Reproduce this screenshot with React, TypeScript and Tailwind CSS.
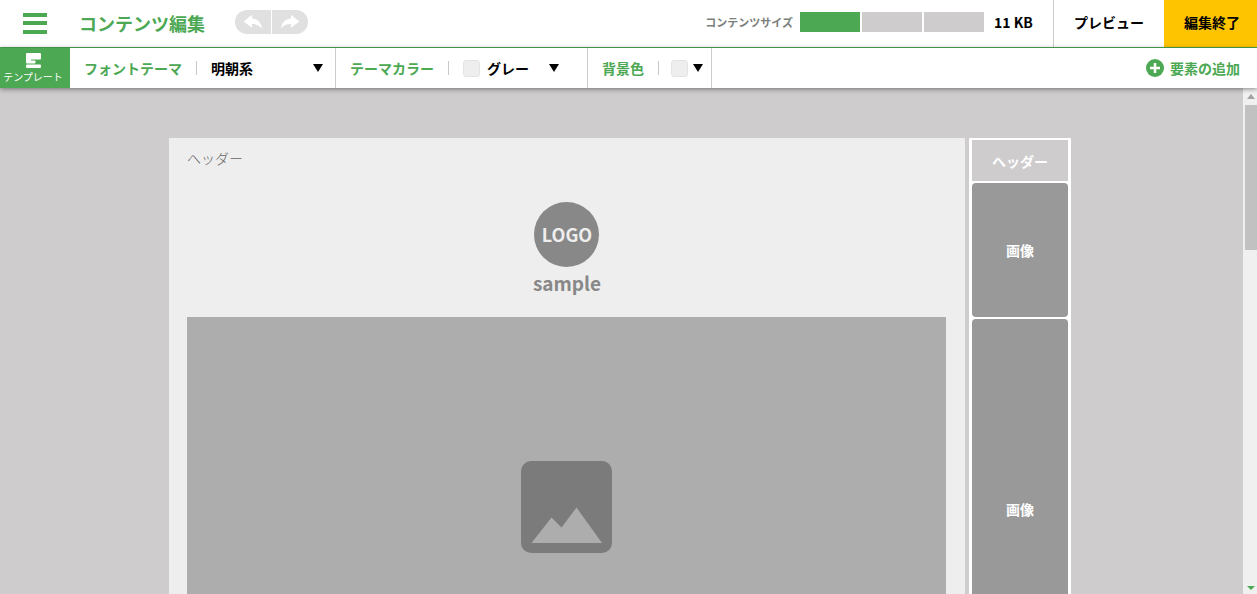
import React from 'react';

const sizeSteps = [
  { id: 'small', className: 'bg-[#4ca853]' },
  { id: 'medium', className: 'bg-[#cecccd]' },
  { id: 'large', className: 'bg-[#cecccd]' },
];

const blocks = [
  { id: 'image-1', label: '画像', className: 'h-[134px]' },
  { id: 'image-2', label: '画像', className: 'h-[380px]' },
];

const Arrow = ({ className = '' }: { className?: string }) => (
  <svg className={`h-2 w-2.5 shrink-0 ${className}`} viewBox="0 0 10 8" aria-hidden="true">
    <path d="M0 0h10L5 8z" fill="currentColor" />
  </svg>
);

const Divider = () => <span className="h-3.5 w-px shrink-0 bg-[#c8c8c8]" />;

const Swatch = () => (
  <span className="h-[17px] w-[17px] shrink-0 rounded-[3px] border border-[#e3e5e3] bg-[#eeeeee]" />
);

const HistoryArrow = () => (
  <path d="M8.600 8.500 17 1.800v3.700c5.500.4 9 3.800 10.200 10.300-2.700-3.300-5.700-4.700-10.200-4.700v3.600z" fill="#fff" />
);

const Header = () => (
  <header className="flex h-12 shrink-0 items-stretch border-b border-[#4ca853] bg-white">
    <button type="button" aria-label="メニュー" className="flex w-[70px] shrink-0 items-center justify-center">
      <svg width="24" height="21" viewBox="0 0 24 21" fill="#4ca853">
        <path d="M0 0h24v4H0zM0 8h24v4H0zM0 17h24v4H0z" />
      </svg>
    </button>
    <h1 className="ml-[9px] flex shrink-0 items-center pb-0.5 text-lg font-bold text-[#4ca853]">コンテンツ編集</h1>
    <div className="mb-1 ml-[30px] flex shrink-0 items-center gap-px">
      <button type="button" aria-label="元に戻す" className="h-6 w-9 rounded-l-full bg-[#e0e0e0]">
        <svg width="36" height="24" viewBox="0 -3 36 24">
          <HistoryArrow />
        </svg>
      </button>
      <button type="button" aria-label="やり直す" className="h-6 w-9 rounded-r-full bg-[#e0e0e0]">
        <svg width="36" height="24" viewBox="0 -3 36 24">
          <g transform="translate(36 0) scale(-1 1)">
            <HistoryArrow />
          </g>
        </svg>
      </button>
    </div>
    <div className="ml-auto flex shrink-0 items-center pb-[3px]">
      <span className="text-[11px] font-bold text-[#7b807b]">コンテンツサイズ</span>
      <div className="ml-[7px] flex gap-0.5">
        {sizeSteps.map((step) => (
          <span key={step.id} className={`h-5 w-[60px] ${step.className}`} />
        ))}
      </div>
      <span className="ml-2.5 w-[59px] text-sm font-bold">11 KB</span>
    </div>
    <button type="button" className="w-[111px] shrink-0 border-l border-[#cccccc] pb-[3px] text-sm font-bold">
      プレビュー
    </button>
    <button type="button" className="w-[93px] shrink-0 bg-[#ffc400] pb-[3px] pl-[3px] text-sm font-bold">
      編集終了
    </button>
  </header>
);

const Toolbar = () => (
  <div className="relative z-10 flex h-10 shrink-0 items-stretch bg-white text-sm font-bold shadow-[0_1px_5px_rgba(0,0,0,0.45)]">
    <button
      type="button"
      className="flex w-[70px] shrink-0 flex-col items-center bg-[#4ca853] pt-[5px] pr-1 text-[10px] font-normal text-white"
    >
      <svg width="15" height="15" viewBox="0 0 15 15" fill="#fff">
        <rect width="15" height="6.500" rx="1" />
        <path d="M0 4h5v4H0z" />
        <rect y="7.500" width="9.500" height="3" rx="1" />
        <rect y="11.500" width="15" height="3.500" rx="1" />
      </svg>
      <span className="mt-px whitespace-nowrap leading-4">テンプレート</span>
    </button>

    <div className="flex w-[266px] shrink-0 items-center gap-3.5 border-r border-[#cccccc] pl-3.5">
      <label htmlFor="font-theme" className="text-[#4ca853]">
        フォントテーマ
      </label>
      <Divider />
      <div className="relative flex flex-1 items-center">
        <select id="font-theme" className="w-full appearance-none bg-transparent">
          <option>明朝系</option>
        </select>
        <Arrow className="pointer-events-none absolute right-3" />
      </div>
    </div>

    <div className="flex w-[252px] shrink-0 items-center gap-3.5 border-r border-[#cccccc] pl-3.5">
      <label htmlFor="theme-color" className="text-[#4ca853]">
        テーマカラー
      </label>
      <Divider />
      <div className="relative mr-7 flex flex-1 items-center gap-[7px]">
        <Swatch />
        <select id="theme-color" className="w-full appearance-none bg-transparent">
          <option>グレー</option>
        </select>
        <Arrow className="pointer-events-none absolute right-0" />
      </div>
    </div>

    <div className="flex w-[124px] shrink-0 items-center gap-3 border-r border-[#cccccc] pl-3.5">
      <span id="background-label" className="mr-0.5 text-[#4ca853]">
        背景色
      </span>
      <Divider />
      <button type="button" aria-labelledby="background-label" className="flex items-center gap-[5px]">
        <Swatch />
        <Arrow />
      </button>
    </div>

    <button type="button" className="ml-auto flex shrink-0 items-center gap-1.5 pr-[17px] text-[#4ca853]">
      <svg width="18" height="18" viewBox="0 0 18 18">
        <circle cx="9" cy="9" r="9" fill="#4ca853" />
        <path d="M9 4v10M4 9h10" stroke="#fff" strokeWidth="2.500" />
      </svg>
      要素の追加
    </button>
  </div>
);

const SampleLogo = () => (
  <svg
    className="mx-auto block font-['Noto_Sans_CJK_JP',sans-serif] font-bold"
    width="80"
    height="98"
    viewBox="0 0 80 98"
    textAnchor="middle"
  >
    <circle cx="39.500" cy="32.500" r="32.500" fill="#888888" />
    <text x="40" y="40" fontSize="18" fill="#eeeeee">
      LOGO
    </text>
    <text x="40" y="89" fontSize="19" fill="#888888">
      sample
    </text>
  </svg>
);

const Canvas = () => (
  <section className="min-w-0 flex-1 bg-[#eeeeee] px-[18px] pr-[19px]">
    <p className="pt-2.5 font-['Liberation_Serif','Noto_Sans_CJK_JP',serif] text-sm leading-6 font-light text-[#666666]">
      ヘッダー
    </p>
    <div className="pt-[30px] pb-[17px]">
      <SampleLogo />
    </div>
    <div className="flex h-[380px] items-center justify-center bg-[#adadad]">
      <svg width="91" height="92" viewBox="0 0 91 92" role="img" aria-label="画像">
        <rect width="91" height="92" rx="10" fill="#7b7b7b" />
        <path d="M10.500 82 30.500 56.500 40.500 66.500 55.500 46.500 81 82z" fill="#adadad" />
      </svg>
    </div>
  </section>
);

const Outline = () => (
  <nav className="flex w-[102px] shrink-0 flex-col gap-0.5 bg-white px-[3px] pt-0.5 text-sm font-bold text-white">
    <button type="button" className="h-[41px] shrink-0 bg-[#cecccd]">
      ヘッダー
    </button>
    {blocks.map((block) => (
      <button key={block.id} type="button" className={`shrink-0 rounded bg-[#999999] ${block.className}`}>
        {block.label}
      </button>
    ))}
  </nav>
);

const ScrollTrack = () => (
  <div className="flex w-3.5 shrink-0 flex-col items-end bg-[#f0f0f0] pt-1.5" aria-hidden="true">
    <svg className="mr-0.5" width="8" height="5" viewBox="0 0 8 5">
      <path d="M4 0 8 5H0z" fill="#a3a3a3" />
    </svg>
    <span className="mt-1.5 h-[145px] w-3 bg-[#c1c1c1]" />
    <svg className="mt-auto mr-0.5 mb-1" width="8" height="4" viewBox="0 0 8 4">
      <path d="M0 0h8L4 4z" fill="#4ca853" />
    </svg>
  </div>
);

const App = () => {
  return (
    <div className="flex h-screen flex-col overflow-hidden bg-[#cecccd] font-['Noto_Sans_CJK_JP',sans-serif] text-black">
      <Header />
      <Toolbar />
      <div className="flex min-h-0 flex-1">
        <main className="min-w-0 flex-1 overflow-hidden pt-[50px]">
          <div className="mx-auto flex max-w-[905px] gap-1 pr-[3px]">
            <Canvas />
            <Outline />
          </div>
        </main>
        <ScrollTrack />
      </div>
    </div>
  );
};

export default App;
